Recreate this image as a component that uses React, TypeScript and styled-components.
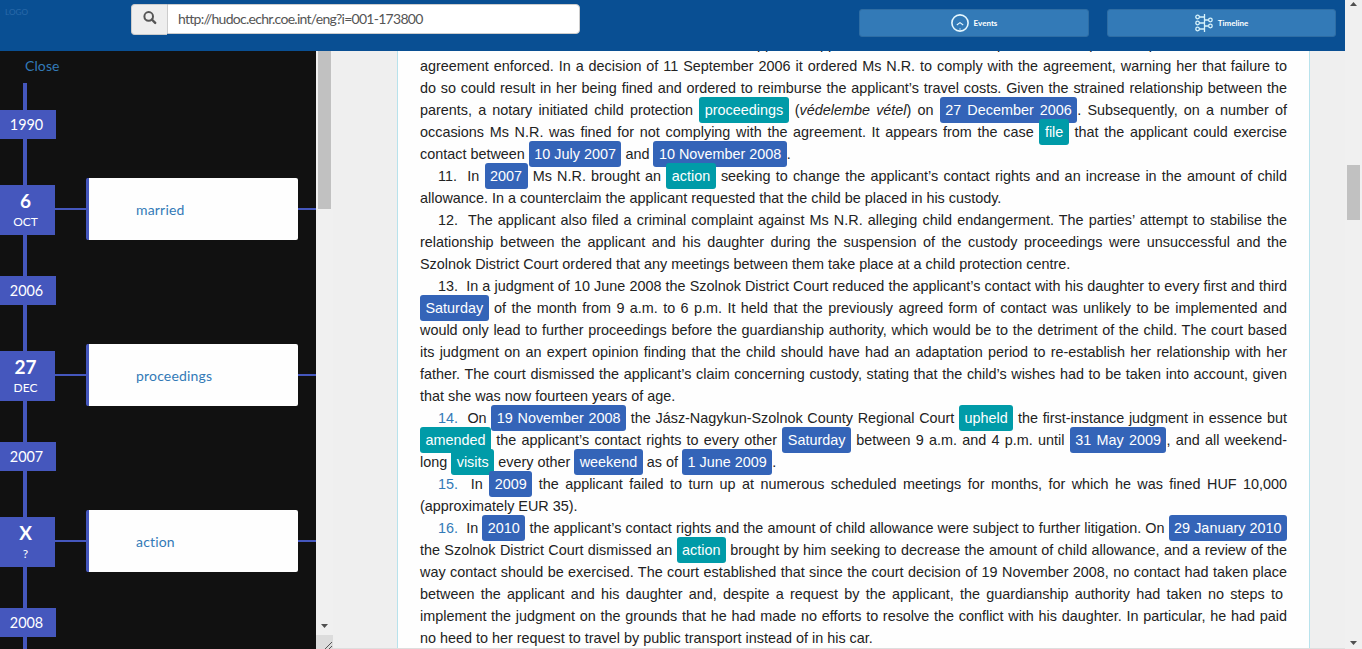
import React from 'react';
import styled, { createGlobalStyle } from 'styled-components';

const Global = createGlobalStyle`
  *, *::before, *::after { box-sizing: border-box; }
  body { margin: 0; background: #efefef; font-family: Lato, sans-serif; font-size: 14px; }
  #root { height: 649px; overflow: hidden; }
`;

const Page = styled.div`
  display: grid;
  grid-template-columns: 1345px 17px;
  height: 649px;
`;
const Content = styled.div`
  display: flex;
  flex-direction: column;
  height: 649px;
  overflow: hidden;
`;
const Header = styled.header`
  flex: none;
  display: flex;
  align-items: flex-start;
  height: 51px;
  background: #094f93;
`;
const Logo = styled.a`
  width: 131px;
  padding: 7px 0 0 5px;
  color: #2a6aaa;
  font-size: 8.2px;
  line-height: 11px;
`;
const Search = styled.div`
  display: flex;
  align-items: flex-start;
  width: 449px;
  margin-top: 4px;
`;
const SearchButton = styled.span`
  display: flex;
  justify-content: center;
  align-items: flex-start;
  padding: 6px 0 0;
  width: 36px;
  height: 31px;
  background: #eee;
  border: 1px solid #ccc;
  border-right: 0;
  border-radius: 4px 0 0 4px;
`;
const SearchText = styled.span`
  flex: 1;
  height: 30px;
  padding-left: 10px;
  border: 1px solid #ccc;
  border-radius: 0 4px 4px 0;
  background: #fff;
  color: #555;
  font-size: 14px;
  letter-spacing: -0.73px;
  line-height: 27px;
`;
const HeaderButton = styled.button<{ $gap: number; $width: number }>`
  display: flex;
  align-items: center;
  justify-content: center;
  gap: 5px;
  width: ${p => p.$width}px;
  height: 28px;
  margin: 9px 0 0 ${p => p.$gap}px;
  padding: 0;
  border: 1px solid #2e6da4;
  border-radius: 3px;
  background: #337ab7;
  color: #fff;
  font: bold 8px Lato, sans-serif;
`;
const ButtonLabel = styled.span`
  padding-bottom: 1px;
`;
const Main = styled.main`
  display: flex;
  height: 598px;
`;

const Sidebar = styled.aside`
  width: 316px;
  height: 598px;
  overflow: hidden;
  background: #111;
`;
const Close = styled.a`
  display: block;
  height: 32px;
  padding: 5px 0 0 25px;
  color: #337ab7;
  font-size: 14px;
  letter-spacing: 0.1px;
  line-height: 20px;
`;
const Track = styled.div`
  display: flex;
  flex-direction: column;
  height: 620px;
  padding-top: 27px;
  background: linear-gradient(#4557bd, #4557bd) 23px 0 / 4px 100% no-repeat;
`;
const Year = styled.div`
  flex: none;
  width: 56px;
  height: 29px;
  padding-right: 3px;
  background: #4557bd;
  color: #fff;
  font-size: 14.4px;
  line-height: 29px;
  text-align: center;
`;
const Entry = styled.div`
  flex: none;
  display: flex;
  align-items: center;
  height: 62px;
  margin: 39px 0 36px;
  background: linear-gradient(#4557bd, #4557bd) 0 30px / 100% 2px no-repeat;
`;
const DateBox = styled.div`
  width: 55px;
  height: 50px;
  margin-top: 2px;
  padding: 4px 4px 0 0;
  background: #4557bd;
  color: #fff;
  text-align: center;
  font-size: 12px;
  line-height: 19px;
`;
const Day = styled.strong`
  display: block;
  font-size: 19px;
  line-height: 23px;
`;
const Card = styled.div`
  width: 212px;
  height: 62px;
  margin-left: 31px;
  padding-left: 47px;
  border-left: 3px solid #4557bd;
  border-radius: 2px;
  background: #fefefe;
  color: #337ab7;
  font-size: 14px;
  letter-spacing: 0.18px;
  line-height: 63px;
`;

const Scroll = styled.div<{ $height: number }>`
  display: flex;
  flex-direction: column;
  align-items: center;
  width: 17px;
  height: ${p => p.$height}px;
  background: #f0f0f0;
`;
const Thumb = styled.div<{ $top: number; $height: number }>`
  flex: none;
  width: 13px;
  height: ${p => p.$height}px;
  margin-top: ${p => p.$top}px;
  background: #c1c1c1;
`;
const Arrow = styled.svg<{ $gap?: number; $end?: number }>`
  flex: none;
  display: block;
  margin-top: ${p => (p.$gap === undefined ? 'auto' : `${p.$gap}px`)};
  margin-bottom: ${p => p.$end ?? 0}px;
`;
const ScrollColumn = styled.div`
  width: 17px;
`;
const Grip = styled.svg`
  display: block;
  background: #dcdcdc;
`;

const DocumentPane = styled.div`
  width: 1012px;
  height: 598px;
  padding-left: 64px;
  border-bottom: 1px solid #dedede;
  overflow: hidden;
`;
const Document = styled.article`
  width: 913px;
  height: 620px;
  margin-top: -22px;
  padding: 4px 22px 0;
  border: solid #b8e2ec;
  border-width: 0 1px;
  background: #fefefe;
  color: #222;
  font-family: "Liberation Sans", Arial, sans-serif;
  font-size: 14.4px;
  line-height: 22px;
`;
const Line = styled.div<{ $indent?: number; $end?: boolean }>`
  height: 22px;
  width: 867px;
  padding-left: ${p => p.$indent ?? 0}px;
  white-space: nowrap;
  text-align: justify;
  text-align-last: ${p => (p.$end ? 'left' : 'justify')};
`;
const Chip = styled.span<{ $date?: boolean }>`
  position: relative;
  padding: 5px 5.5px;
  border-radius: 3px;
  background: ${p => (p.$date ? '#3464b8' : '#009ba8')};
  color: #fff;
`;
const Num = styled.a`
  color: #337ab7;
`;

const D = ({ children }: { children: string }) => <Chip $date>{children}</Chip>;
const E = ({ children }: { children: string }) => <Chip>{children}</Chip>;

const events = [
  { year: '1990', day: '6', month: 'OCT', title: 'married' },
  { year: '2006', day: '27', month: 'DEC', title: 'proceedings' },
  { year: '2007', day: 'X', month: '?', title: 'action' },
];

const Down = ({ end }: { end: number }) => (
  <Arrow $end={end} width="7" height="4"><path d="M0 0h7L3.5 4z" fill="#505050" /></Arrow>
);

export default function App() {
  return (
    <>
      <Global />
      <Page>
        <Content>
          <Header>
            <Logo>LOGO</Logo>
            <Search>
              <SearchButton>
                <svg width="14" height="14" viewBox="0 0 14 14" fill="none" stroke="#555">
                  <circle cx="5.7" cy="5.4" r="4.3" strokeWidth="2" />
                  <path d="M8.8 8.5l3.4 3.4" strokeWidth="2.4" strokeLinecap="round" />
                </svg>
              </SearchButton>
              <SearchText>http://hudoc.echr.coe.int/eng?i=001-173800</SearchText>
            </Search>
            <HeaderButton $gap={279} $width={230}>
              <svg width="18" height="18" viewBox="0 0 18 18" fill="none" stroke="#e6f8ff">
                <circle cx="9" cy="9" r="8.1" strokeWidth="1.6" />
                <path d="M5.8 11L9 8.6l3.2 2.4" strokeWidth="1.1" />
                <path d="M9 14v2" strokeWidth="0.7" />
              </svg>
              <ButtonLabel>Events</ButtonLabel>
            </HeaderButton>
            <HeaderButton $gap={18} $width={229}>
              <svg width="18" height="18" viewBox="0 0 18 18" fill="none" stroke="#d8f3fb" strokeWidth="1.3">
                <path d="M9.5 0v18M4.5 3h5M4.5 9h5M4.5 15h5M9.5 6h4M9.5 12h4" />
                <circle cx="2.6" cy="3" r="1.8" />
                <circle cx="2.6" cy="9" r="1.8" />
                <circle cx="2.6" cy="15" r="1.8" />
                <circle cx="15.4" cy="6" r="1.8" />
                <circle cx="15.4" cy="12" r="1.8" />
              </svg>
              <ButtonLabel>Timeline</ButtonLabel>
            </HeaderButton>
          </Header>
          <Main>
            <Sidebar>
              <Close>Close</Close>
              <Track>
                {events.map(e => (
                  <React.Fragment key={e.year}>
                    <Year>{e.year}</Year>
                    <Entry>
                      <DateBox><Day>{e.day}</Day>{e.month}</DateBox>
                      <Card>{e.title}</Card>
                    </Entry>
                  </React.Fragment>
                ))}
                <Year>2008</Year>
              </Track>
            </Sidebar>
            <ScrollColumn>
              <Scroll $height={584}>
                <Thumb $top={0} $height={158} />
                <Down end={7} />
              </Scroll>
              <Grip width="17" height="14"><path d="M9 14l7-7M13 14l3-3" stroke="#555" /></Grip>
            </ScrollColumn>
            <DocumentPane>
              <Document>
                <Line $indent={329}>applicant applied to the court when a plan after the parent a part after the old one</Line>
                <Line>agreement enforced. In a decision of 11 September 2006 it ordered Ms N.R. to comply with the agreement, warning her that failure to</Line>
                <Line>do so could result in her being fined and ordered to reimburse the applicant’s travel costs. Given the strained relationship between the</Line>
                <Line>parents, a notary initiated child protection <E>proceedings</E> (<i>védelembe vétel</i>) on <D>27 December 2006</D>. Subsequently, on a number of</Line>
                <Line>occasions Ms N.R. was fined for not complying with the agreement. It appears from the case <E>file</E> that the applicant could exercise</Line>
                <Line $end>contact between <D>10 July 2007</D> and <D>10 November 2008</D>.</Line>
                <Line $indent={18}>11.&nbsp; In <D>2007</D> Ms N.R. brought an <E>action</E> seeking to change the applicant’s contact rights and an increase in the amount of child</Line>
                <Line $end>allowance. In a counterclaim the applicant requested that the child be placed in his custody.</Line>
                <Line $indent={18}>12.&nbsp; The applicant also filed a criminal complaint against Ms N.R. alleging child endangerment. The parties’ attempt to stabilise the</Line>
                <Line>relationship between the applicant and his daughter during the suspension of the custody proceedings were unsuccessful and the</Line>
                <Line $end>Szolnok District Court ordered that any meetings between them take place at a child protection centre.</Line>
                <Line $indent={18}>13.&nbsp; In a judgment of 10 June 2008 the Szolnok District Court reduced the applicant’s contact with his daughter to every first and third</Line>
                <Line><D>Saturday</D> of the month from 9 a.m. to 6 p.m. It held that the previously agreed form of contact was unlikely to be implemented and</Line>
                <Line>would only lead to further proceedings before the guardianship authority, which would be to the detriment of the child. The court based</Line>
                <Line>its judgment on an expert opinion finding that the child should have had an adaptation period to re-establish her relationship with her</Line>
                <Line>father. The court dismissed the applicant’s claim concerning custody, stating that the child’s wishes had to be taken into account, given</Line>
                <Line $end>that she was now fourteen years of age.</Line>
                <Line $indent={18}><Num>14.</Num>&nbsp; On <D>19 November 2008</D> the Jász-Nagykun-Szolnok County Regional Court <E>upheld</E> the first-instance judgment in essence but</Line>
                <Line><E>amended</E> the applicant’s contact rights to every other <D>Saturday</D> between 9 a.m. and 4 p.m. until <D>31 May 2009</D>, and all weekend-</Line>
                <Line $end>long <E>visits</E> every other <D>weekend</D> as of <D>1 June 2009</D>.</Line>
                <Line $indent={18}><Num>15.</Num>&nbsp; In <D>2009</D> the applicant failed to turn up at numerous scheduled meetings for months, for which he was fined HUF 10,000</Line>
                <Line $end>(approximately EUR 35).</Line>
                <Line $indent={18}><Num>16.</Num>&nbsp; In <D>2010</D> the applicant’s contact rights and the amount of child allowance were subject to further litigation. On <D>29 January 2010</D></Line>
                <Line>the Szolnok District Court dismissed an <E>action</E> brought by him seeking to decrease the amount of child allowance, and a review of the</Line>
                <Line>way contact should be exercised. The court established that since the court decision of 19 November 2008, no contact had taken place</Line>
                <Line>between the applicant and his daughter and, despite a request by the applicant, the guardianship authority had taken no steps to&nbsp;</Line>
                <Line>implement the judgment on the grounds that he had made no efforts to resolve the conflict with his daughter. In particular, he had paid</Line>
                <Line $end>no heed to her request to travel by public transport instead of in his car.</Line>
              </Document>
            </DocumentPane>
          </Main>
        </Content>
        <Scroll $height={649}>
          <Arrow $gap={2} width="7" height="4"><path d="M0 4h7L3.5 0z" fill="#505050" /></Arrow>
          <Thumb $top={159} $height={55} />
          <Down end={4} />
        </Scroll>
      </Page>
    </>
  );
}
